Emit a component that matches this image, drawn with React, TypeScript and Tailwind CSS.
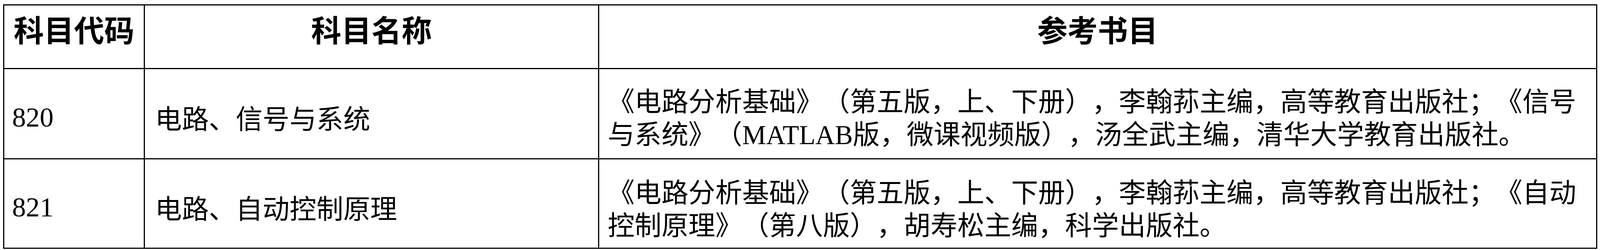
const cjk = "font-['Noto_Sans_CJK_SC',sans-serif] [text-spacing-trim:space-all]";

const rows = [
  {
    code: "820",
    name: "电路、信号与系统",
    books: [
      "《电路分析基础》（第五版，上、下册），李翰荪主编，高等教育出版社；《信号",
      "与系统》（|MATLAB|版，微课视频版），汤全武主编，清华大学教育出版社。",
    ],
  },
  {
    code: "821",
    name: "电路、自动控制原理",
    books: [
      "《电路分析基础》（第五版，上、下册），李翰荪主编，高等教育出版社；《自动",
      "控制原理》（第八版），胡寿松主编，科学出版社。",
    ],
  },
];

// latin runs are wrapped in |...| so they get the serif face
function BookLine({ text }: { text: string }) {
  const parts = text.split("|");
  return (
    <div className="whitespace-nowrap">
      {parts.map((p, i) =>
        i % 2 === 1 ? (
          <span key={i} className="font-['Liberation_Serif',serif]">
            {p}
          </span>
        ) : (
          <span key={i}>{p}</span>
        )
      )}
    </div>
  );
}

function HeadCell({ children }: { children: React.ReactNode }) {
  return (
    <div
      className={`h-[163px] border-r-[3px] border-b-[3px] border-black flex justify-center pt-[9px] text-[1.886vw] leading-[100px] font-bold ${cjk}`}
    >
      {children}
    </div>
  );
}

export default function App() {
  return (
    <div className="w-full h-[640px] overflow-hidden bg-white pt-[11px] pl-[0.205vw] pr-[0.18vw] text-black">
      <div className="grid w-full grid-cols-[386fr_1250fr_2744fr] border-l-[3px] border-t-[3px] border-black">
        <HeadCell>科目代码</HeadCell>
        <HeadCell>科目名称</HeadCell>
        <HeadCell>参考书目</HeadCell>

        {rows.map((r, idx) => {
          const h = idx === 0 ? "h-[231px]" : "h-[229px]";
          return (
            <div key={r.code} className="contents">
              <div
                className={`${h} border-r-[3px] border-b-[3px] border-black flex items-center pt-[18px] pl-[0.477vw] text-[1.727vw] leading-[84px] font-['Liberation_Serif',serif]`}
              >
                {r.code}
              </div>
              <div
                className={`${h} border-r-[3px] border-b-[3px] border-black flex items-center pt-[18px] pl-[0.636vw] text-[1.682vw] leading-[84px] ${cjk}`}
              >
                {r.name}
              </div>
              <div
                className={`${h} min-w-0 border-r-[3px] border-b-[3px] border-black flex flex-col justify-center pt-[18px] pl-[0.523vw] text-[1.682vw] leading-[84px] ${cjk}`}
              >
                {r.books.map((b, i) => (
                  <BookLine key={i} text={b} />
                ))}
              </div>
            </div>
          );
        })}
      </div>
    </div>
  );
}
